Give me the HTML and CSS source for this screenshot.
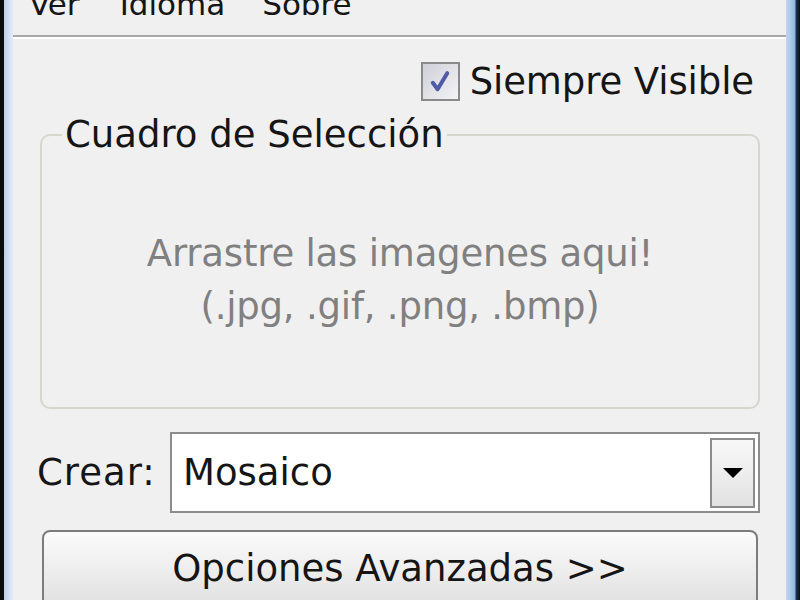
FILE: index.html
```html
<!DOCTYPE html>
<html lang="es">
<head>
<meta charset="utf-8">
<link rel="stylesheet" href="styles.css">
</head>
<body>
<div class="window">
  <div class="frame-left"></div>
  <div class="client">
    <div class="menubar">
      <span class="menu-item m-ver">Ver</span>
      <span class="menu-item m-idioma">Idioma</span>
      <span class="menu-item m-sobre">Sobre</span>
    </div>
    <div class="body">
      <div class="always-row">
        <span class="checkbox">
          <svg viewBox="0 0 40 40" width="32" height="32">
            <path d="M11 21 L17 29 L29 9" fill="none" stroke="#4f5aa8" stroke-width="5" stroke-linecap="round" stroke-linejoin="round"/>
          </svg>
        </span>
        <span class="always-label">Siempre Visible</span>
      </div>
      <fieldset class="group">
        <legend class="group-legend">Cuadro de Selección</legend>
        <div class="drop-text">
          <div>Arrastre las imagenes aqui!</div>
          <div>(.jpg, .gif, .png, .bmp)</div>
        </div>
      </fieldset>
      <div class="create-row">
        <span class="create-label">Crear:</span>
        <div class="combo">
          <span class="combo-value">Mosaico</span>
          <span class="combo-btn"><span class="arrow"></span></span>
        </div>
      </div>
      <div class="adv-button">Opciones Avanzadas &gt;&gt;</div>
    </div>
  </div>
  <div class="frame-right"></div>
</div>
</body>
</html>
```
FILE: styles.css
```css
html, body {
  margin: 0;
  padding: 0;
  width: 800px;
  height: 600px;
  overflow: hidden;
  background: #f0f0f0;
  font-family: "DejaVu Sans", sans-serif;
  color: #151515;
}
.window {
  display: flex;
  width: 800px;
  height: 600px;
}
.frame-left {
  width: 13px;
  flex: none;
  background: linear-gradient(to right, #0b0b0b 0, #0b0b0b 4px, #b8cfea 4px, #d2e1f3 9px, #e4edf7 13px);
}
.frame-right {
  width: 14px;
  flex: none;
  background: linear-gradient(to right, #c0d6ee 0, #a9c8e8 5px, #8cb6df 9px, #1d3550 10px, #0a0f18 14px);
}
.client {
  flex: 1;
  display: flex;
  flex-direction: column;
  background: #f0f0f0;
}
.menubar {
  height: 35px;
  flex: none;
  border-bottom: 2px solid #a8a8a8;
  box-shadow: 0 2px 0 #ffffff;
  display: flex;
  align-items: flex-end;
  overflow: hidden;
  font-size: 31px;
}
.menu-item {
  line-height: 1;
  margin-bottom: 15px;
}
.m-ver { margin-left: 16px; }
.m-idioma { margin-left: 40px; }
.m-sobre { margin-left: 37px; }
.body {
  flex: 1;
  display: flex;
  flex-direction: column;
  padding: 0 26px 0 27px;
}
.always-row {
  display: flex;
  justify-content: flex-end;
  align-items: center;
  margin-top: 25px;
  gap: 10px;
}
.checkbox {
  width: 35px;
  height: 35px;
  border: 2px solid #8a8a8a;
  background: linear-gradient(135deg, #cfd0d8, #f4f4f6);
  display: flex;
  align-items: center;
  justify-content: center;
}
.always-label {
  font-size: 37px;
  letter-spacing: -0.1px;
  line-height: 1;
  margin-right: 6px;
}
.group {
  margin: 15px 0 0 0;
  padding: 74px 0 74px 0;
  border: 2px solid #d6d6cc;
  border-radius: 10px;
  min-width: 0;
}
.group-legend {
  font-size: 37px;
  line-height: 1;
  padding: 0 3px;
  margin-left: 20px;
}
.drop-text {
  text-align: center;
  color: #808080;
  font-size: 37px;
  letter-spacing: -0.2px;
  line-height: 53px;
}
.create-row {
  display: flex;
  align-items: center;
  margin-top: 23px;
  gap: 19px;
}
.create-label {
  font-size: 37px;
  letter-spacing: 1px;
  margin-left: -3px;
  width: 114px;
}
.combo {
  flex: 1;
  height: 77px;
  border: 2px solid #8c8c8c;
  background: #ffffff;
  display: flex;
  align-items: center;
  padding: 0 3px 0 11px;
}
.combo-value {
  flex: 1;
  font-size: 37px;
}
.combo-btn {
  width: 41px;
  height: 66px;
  border: 2px solid #8c8c8c;
  background: linear-gradient(to bottom, #f8f8f8, #e2e2e2);
  display: flex;
  align-items: center;
  justify-content: center;
}
.arrow {
  width: 0;
  height: 0;
  border-left: 10px solid transparent;
  border-right: 10px solid transparent;
  border-top: 10px solid #000;
}
.adv-button {
  margin: 17px 2px 0 2px;
  height: 84px;
  flex: none;
  border: 2px solid #7c7c7c;
  border-radius: 8px;
  background: linear-gradient(to bottom, #fbfbfb 0%, #ececec 50%, #dcdcdc 100%);
  font-size: 37px;
  text-align: center;
  line-height: 74px;
}
```
